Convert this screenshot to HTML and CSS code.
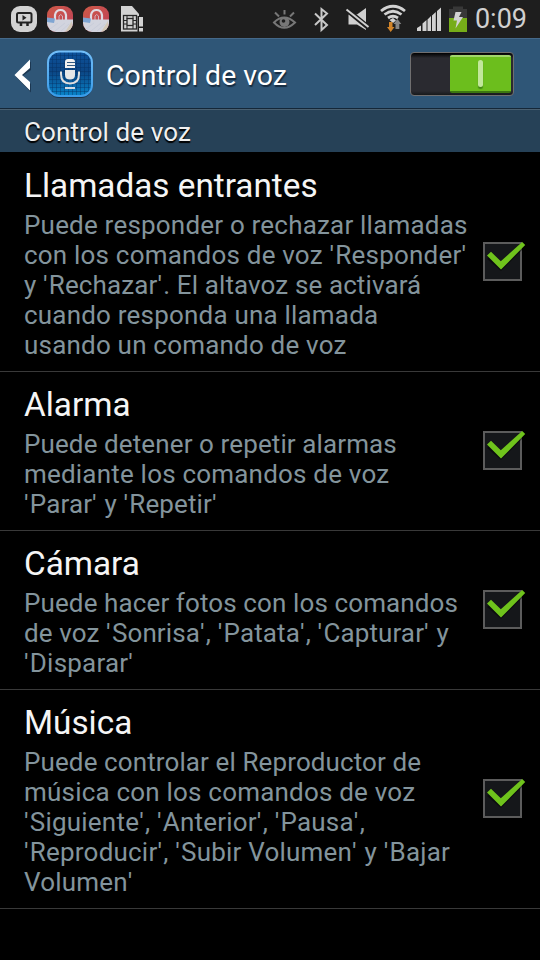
FILE: index.html
```
<!DOCTYPE html>
<html lang="es">
<head>
<meta charset="utf-8">
<title>Control de voz</title>
<link rel="stylesheet" href="styles.css">
</head>
<body>
<svg class="defs" width="0" height="0" aria-hidden="true">
  <defs>
    <linearGradient id="red" x1="0" y1="0" x2="1" y2="1"><stop offset="0" stop-color="#cf5a48"/><stop offset="1" stop-color="#bd3f58"/></linearGradient>
    <linearGradient id="blue" x1="0" y1="0" x2="0" y2="1"><stop offset="0" stop-color="#0d529c"/><stop offset=".45" stop-color="#0b4583"/><stop offset="1" stop-color="#0784c9"/></linearGradient>
    <linearGradient id="rim" x1="0" y1="0" x2="0" y2="1"><stop offset="0" stop-color="#72bef9"/><stop offset="1" stop-color="#3a9be8"/></linearGradient>
    <pattern id="mesh" width="4" height="4" patternUnits="userSpaceOnUse"><path d="M0 .5h4M.5 0v4" stroke="#062c60" stroke-opacity=".38"/></pattern>
    <clipPath id="bagclip"><rect x="0" y="0" width="26" height="26" rx="9"/></clipPath>
    <symbol id="check" viewBox="0 0 46 46">
      <rect x="2" y="6" width="37" height="37" fill="#15171a" stroke="#5c5c5c" stroke-width="2"/>
      <path d="M5 22L8.500 18.500L18.500 27L39 6.500L43 10L19 34z" fill="#000" opacity=".45"/>
      <path d="M5 18.500L9 14.800L18.800 24.300L40.200 5L43.200 8L19 32.500z" fill="#6fc31c"/>
    </symbol>
    <g id="bag" clip-path="url(#bagclip)">
      <rect width="26" height="26" fill="url(#red)"/>
      <path d="M8 15V9Q9 4 13.500 4T19 9V16" fill="none" stroke="#dfdbe4" stroke-width="2.200"/>
      <path d="M12 14V10Q13.500 7 15.500 10V15" fill="none" stroke="#d3b3c0" stroke-width="1"/>
      <rect x="0" y="13.500" width="26" height="12.500" fill="#d2d4de"/>
      <path d="M0 11.500L8 12.500L7 17L0 16z" fill="#7fa5d2"/>
      <path d="M25 15V26H18z" fill="#d2c8b8"/>
      <path d="M3 23l8-6M8 25l10-8M14 25l8-7" stroke="#bfc4d4" stroke-width=".5"/>
    </g>
  </defs>
</svg>

<header class="status">
  <svg class="status-icons" width="540" height="38" viewBox="0 0 540 38">
    <rect x="11" y="6" width="26" height="26" rx="9" fill="#d2d2d2"/>
    <rect x="17" y="13" width="14.500" height="9.500" rx="1.500" fill="none" stroke="#222" stroke-width="2"/>
    <path d="M22.500 15v5.500l4-2.750z" fill="#222"/>
    <path d="M21 23v3M27.500 23v3" stroke="#222" stroke-width="2.500"/>
    <use href="#bag" transform="translate(47 6)"/>
    <use href="#bag" transform="translate(83 6)"/>
    <path d="M121 6H132L139 14V31.500H121z" fill="#d2d2d2"/>
    <rect x="123.500" y="15.500" width="13" height="13.500" fill="#d2d2d2" stroke="#262626" stroke-width="1.300"/>
    <rect x="127" y="18.500" width="6" height="7" fill="none" stroke="#262626" stroke-width="1.300"/>
    <path d="M124 20.500h3M124 24h3M133 20.500h3M133 24h3M127 15.500v3M133 15.500v3M127 26v3M133 26v3" stroke="#262626"/>
    <path d="M137.500 16h7v17h-7z" fill="#1e1e1e"/>
    <path d="M139 17h4v9.500h-4zM139 28h4v3.500h-4z" fill="#d2d2d2"/>
    <g fill="none" stroke="#777" stroke-width="2">
      <path d="M274 22.500Q284 12.500 295 22.500Q284 33 274 22.500z"/>
      <path d="M275 12.500l4 4M284.500 10v4.500M294 12.500l-4 4"/>
    </g>
    <circle cx="284.500" cy="22" r="5" fill="#777"/><circle cx="283.500" cy="21" r="1.800" fill="#1e1e1e"/>
    <path d="M315 13.500L327 25L321.500 30V9L327 13.500L315 25" fill="none" stroke="#c8c8c8" stroke-width="2"/>
    <path d="M348.500 14.500H357L366 8V30L357 24.500H348.500z" fill="#d0d0d0"/>
    <path d="M346 9L369 28" stroke="#1e1e1e" stroke-width="5"/>
    <path d="M346.500 9.500L368.500 27" stroke="#d0d0d0" stroke-width="2"/>
    <g fill="none" stroke="#d2d2d2" stroke-width="2.800">
      <path d="M381 11Q393 1.500 405 11"/><path d="M384.500 14.500Q393 8 401.500 14.500"/><path d="M388 18Q393 14.500 398 18"/>
    </g>
    <path d="M389.500 20L393 18L396 20.500L393 23z" fill="#d2d2d2"/>
    <path d="M389 22h3.500v5h2L390.700 32L387 27h2z" fill="#d18429"/>
    <path d="M395.500 29v-5h-2l3.900-5L401.300 24h-2v5z" fill="#858585"/>
    <path d="M417 31v-3l4-2.500V31zM422.500 31v-7.500l4-3.500V31zM427.500 31V19.500l3.500-3.500V31zM432 31V15.500l3.800-3.500V31zM437 31V11l4-3.500V31z" fill="#d2d2d2"/>
    <path d="M449 9h4V6.500h10V9h4v9h-18z" fill="#383838"/><path d="M449 18h18v14h-18z" fill="#76ad18"/>
    <path d="M455.500 12h6l-2.500 5h4L455.500 28.500L457 20.500h-3.500z" fill="#d2d2d2"/>
  </svg>
  <span class="clock">0:09</span>
</header>

<div class="bar">
  <svg class="bar-icons" width="95" height="70" viewBox="0 0 95 70">
    <path d="M31 22.500V31L22.500 37L31 45V53.500L16 38z" fill="#1c3751"/>
    <path d="M30 20.500V29L22 36L30 43V51.500L14.500 36z" fill="#fff"/>
    <rect x="48" y="14" width="44" height="45" rx="11" fill="#1b334b"/>
    <rect x="48" y="12.500" width="44" height="44.500" rx="11" fill="url(#blue)"/>
    <rect x="48" y="12.500" width="44" height="44.500" rx="11" fill="url(#mesh)" stroke="url(#rim)" stroke-width="2"/>
    <path d="M65 29V23Q65 20 68 20H72Q75 20 75 23V29z" fill="#f1f1f1"/>
    <path d="M67 23.500h8M67 26.500h8" stroke="#315980" stroke-width="1"/>
    <path d="M65 31H75V36Q75 40.500 70 40.500T65 36z" fill="#e7e7e7"/>
    <path d="M61 32.500V35Q61 44.500 70 44.500T79 35V32.500" fill="none" stroke="#dedede" stroke-width="2"/>
    <path d="M65 49h10" stroke="#cfdae3" stroke-width="2"/>
  </svg>
  <h1>Control de voz</h1>
  <div class="switch"><div class="thumb"><i></i></div></div>
</div>

<h2 class="section">Control de voz</h2>

<main>
  <section class="row first">
    <div class="text"><h3>Llamadas entrantes</h3>
    <p><span class="wide">Puede responder o rechazar llamadas</span><br>
    <span class="wide">con los comandos de voz <b>'</b>Responder<b>'</b></span><br>
    y <b>'</b>Rechazar<b>'</b>. El altavoz se activará<br>
    <span class="wide">cuando responda una llamada</span><br>
    <span class="wide">usando un comando de voz</span></p></div>
    <svg class="check"><use href="#check"/></svg>
  </section>
  <section class="row">
    <div class="text"><h3>Alarma</h3>
    <p>Puede detener o repetir alarmas<br>
    <span class="wide">mediante los comandos de voz</span><br>
    <b>'</b>Parar<b>'</b> y <b>'</b>Repetir<b>'</b></p></div>
    <svg class="check"><use href="#check"/></svg>
  </section>
  <section class="row">
    <div class="text"><h3>Cámara</h3>
    <p>Puede hacer fotos con los comandos<br>
    de voz <b>'</b>Sonrisa<b>'</b>, <b>'</b>Patata<b>'</b>, <b>'</b>Capturar<b>'</b> y<br>
    <span class="wide"><b>'</b>Disparar<b>'</b></span></p></div>
    <svg class="check"><use href="#check"/></svg>
  </section>
  <section class="row">
    <div class="text"><h3>Música</h3>
    <p>Puede controlar el Reproductor de<br>
    <span class="wide">música con los comandos de voz</span><br>
    <span class="wide"><b>'</b>Siguiente<b>'</b>, <b>'</b>Anterior<b>'</b>, <b>'</b>Pausa<b>'</b>,</span><br>
    <span class="wide"><b>'</b>Reproducir<b>'</b>, <b>'</b>Subir Volumen<b>'</b> y <b>'</b>Bajar</span><br>
    <span class="wide">Volumen<b>'</b></span></p></div>
    <svg class="check"><use href="#check"/></svg>
  </section>
</main>
</body>
</html>
```
FILE: styles.css
```
* { box-sizing: border-box; }
body { margin: 0; width: 540px; height: 960px; overflow: hidden; background: #000; color: #f5f5f5; font-family: Roboto, sans-serif; }
h1, h2, h3, p { margin: 0; font-weight: 400; white-space: nowrap; }
.defs { position: absolute; }
.status { display: grid; height: 38px; background: #1e1e1e; }
.status-icons, .clock { grid-area: 1 / 1; }
.clock { justify-self: end; padding-right: 13px; font-size: 27px; line-height: 38px; color: #d0d0d0; }
.bar { display: flex; align-items: center; height: 71px; background: #2f5677; border-top: 1px solid #45698a; border-bottom: 1px solid #152738; }
.bar-icons { flex: none; }
h1 { flex: 1; padding-left: 11px; padding-top: 4px; font-size: 28.4px; line-height: 34px; color: #fff; text-shadow: 1px 2px 1px #162b3f; }
.switch { display: flex; justify-content: flex-end; width: 104px; height: 44px; margin-right: 26px; padding: 2px; border: 1px solid #706f70; border-radius: 4px; background: linear-gradient(#000, #2a2a30 5px, #2a2a30 38px, #17191b); }
.thumb { display: flex; align-items: center; justify-content: center; width: 61px; height: 38px; border-radius: 2px; background: #6cbe1d; border-top: 2px solid #a2d66c; border-bottom: 2px solid #3c7710; }
.thumb i { width: 5px; height: 27px; border-radius: 3px; background: #c2e79b; box-shadow: 0 2px 1px #438914; }
.section { height: 43px; padding-left: 24px; background: #264157; border-top: 1px solid #4a6071; color: #f0f0f0; font-size: 26px; letter-spacing: .1px; line-height: 45px; text-shadow: 0 2px 1px #000; }
.row { display: flex; align-items: center; height: 159px; padding-left: 24px; border-bottom: 1px solid #393939; }
.row:first-child, .row:last-child { height: 219px; }
.first { margin-top: 1px; }
.text { flex: 1; }
h3 { margin-top: -4px; font-size: 33.3px; line-height: 44px; padding-bottom: 2px; }
p { color: #83949c; font-size: 26px; line-height: 30px; letter-spacing: .11px; margin-bottom: -4px; }
.wide { letter-spacing: .2px; }
p b { font-weight: 400; letter-spacing: 1.3px; }
.check { flex: none; width: 46px; height: 46px; margin: 0 12px 4px 0; }
```
